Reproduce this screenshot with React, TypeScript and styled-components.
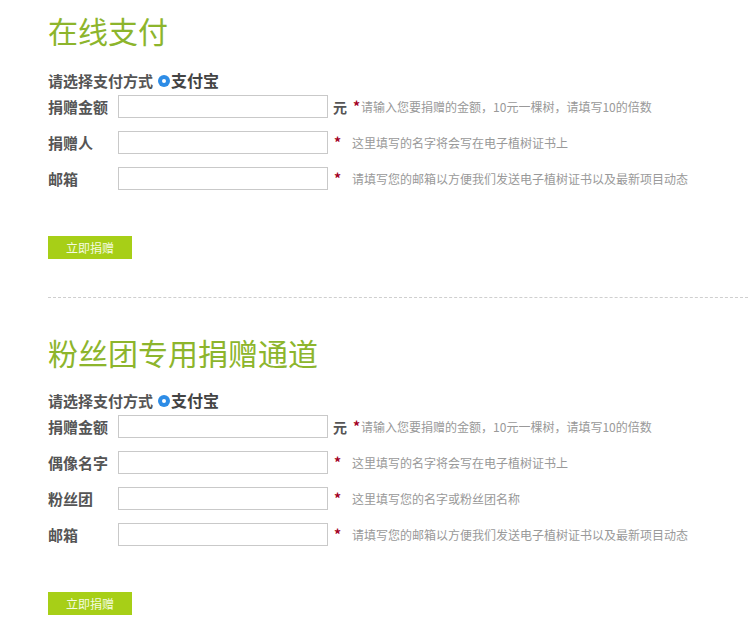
import React from 'react';
import styled, { createGlobalStyle } from 'styled-components';

const GlobalStyle = createGlobalStyle`
  html, body {
    margin: 0;
    padding: 0;
    background: #fff;
    font-family: "Noto Sans CJK SC", "Noto Sans", "Liberation Sans", sans-serif;
  }
`;

const Page = styled.div`
  width: 748px;
  height: 621px;
  overflow: hidden;
  padding-top: 12px;
  box-sizing: border-box;
`;

const Section = styled.section`
  padding-left: 48px;
`;

const Title = styled.h2`
  margin: 0;
  height: 36px;
  font-size: 30px;
  line-height: 36px;
  font-weight: 400;
  color: #8db52c;
`;

const PayRow = styled.div<{ $gap: number }>`
  display: flex;
  align-items: center;
  height: 20px;
  margin-top: ${({ $gap }) => $gap}px;
  font-size: 15px;
  font-weight: 700;
  color: #555;
`;

const Radio = styled.span`
  display: inline-block;
  box-sizing: border-box;
  width: 12px;
  height: 12px;
  margin: 2px 1px 0 5px;
  border-radius: 50%;
  background: #2d8ce6;
  position: relative;

  &::after {
    content: '';
    position: absolute;
    left: 4px;
    top: 4px;
    width: 4px;
    height: 4px;
    border-radius: 50%;
    background: #fff;
  }
`;

const PayName = styled.span`
  font-size: 16px;
  color: #444;
`;

const Fields = styled.div`
  display: flex;
  flex-direction: column;
  gap: 13px;
  margin-top: 5px;
`;

const Row = styled.div`
  display: flex;
  align-items: center;
  height: 23px;
`;

const Label = styled.label`
  width: 70px;
  flex: none;
  font-size: 15px;
  font-weight: 700;
  color: #555;
`;

const TextInput = styled.input`
  box-sizing: border-box;
  width: 210px;
  height: 23px;
  margin: 0;
  padding: 0 4px;
  border: 1px solid #c9c9c9;
  background: #fff;
  outline: none;
`;

const Unit = styled.span`
  margin-left: 5px;
  font-size: 14px;
  font-weight: 700;
  color: #555;
`;

const Star = styled.span<{ $wide: boolean }>`
  margin-left: 6px;
  margin-right: ${({ $wide }) => ($wide ? 11 : 1)}px;
  font-size: 14px;
  font-weight: 700;
  color: #a3001f;
  position: relative;
  top: -1px;
`;

const Hint = styled.span`
  font-size: 12px;
  color: #999;
  white-space: nowrap;
`;

const SubmitButton = styled.button`
  display: block;
  width: 84px;
  height: 23px;
  margin-top: 46px;
  padding: 0;
  border: none;
  background: #a7cf17;
  color: #f4fbe0;
  font-family: inherit;
  font-size: 12px;
  cursor: pointer;
`;

const Divider = styled.hr`
  margin: 38px 0 36px 48px;
  border: none;
  border-top: 1px dashed #cfcfcf;
  height: 0;
`;

type Field = { label: string; unit?: string; hint: string };

const AMOUNT_HINT = '请输入您要捐赠的金额，10元一棵树，请填写10的倍数';
const NAME_HINT = '这里填写的名字将会写在电子植树证书上';
const MAIL_HINT = '请填写您的邮箱以方便我们发送电子植树证书以及最新项目动态';

const sections: { title: string; payGap: number; fields: Field[] }[] = [
  {
    title: '在线支付',
    payGap: 22,
    fields: [
      { label: '捐赠金额', unit: '元', hint: AMOUNT_HINT },
      { label: '捐赠人', hint: NAME_HINT },
      { label: '邮箱', hint: MAIL_HINT },
    ],
  },
  {
    title: '粉丝团专用捐赠通道',
    payGap: 20,
    fields: [
      { label: '捐赠金额', unit: '元', hint: AMOUNT_HINT },
      { label: '偶像名字', hint: NAME_HINT },
      { label: '粉丝团', hint: '这里填写您的名字或粉丝团名称' },
      { label: '邮箱', hint: MAIL_HINT },
    ],
  },
];

const DonateForm = ({ title, payGap, fields }: (typeof sections)[number]) => (
  <Section>
    <Title>{title}</Title>
    <PayRow $gap={payGap}>
      请选择支付方式
      <Radio />
      <PayName>支付宝</PayName>
    </PayRow>
    <Fields>
      {fields.map((f) => (
        <Row key={f.label}>
          <Label>{f.label}</Label>
          <TextInput type="text" />
          {f.unit && <Unit>{f.unit}</Unit>}
          <Star $wide={!f.unit}>*</Star>
          <Hint>{f.hint}</Hint>
        </Row>
      ))}
    </Fields>
    <SubmitButton type="button">立即捐赠</SubmitButton>
  </Section>
);

export default function App() {
  return (
    <>
      <GlobalStyle />
      <Page>
        <DonateForm {...sections[0]} />
        <Divider />
        <DonateForm {...sections[1]} />
      </Page>
    </>
  );
}
